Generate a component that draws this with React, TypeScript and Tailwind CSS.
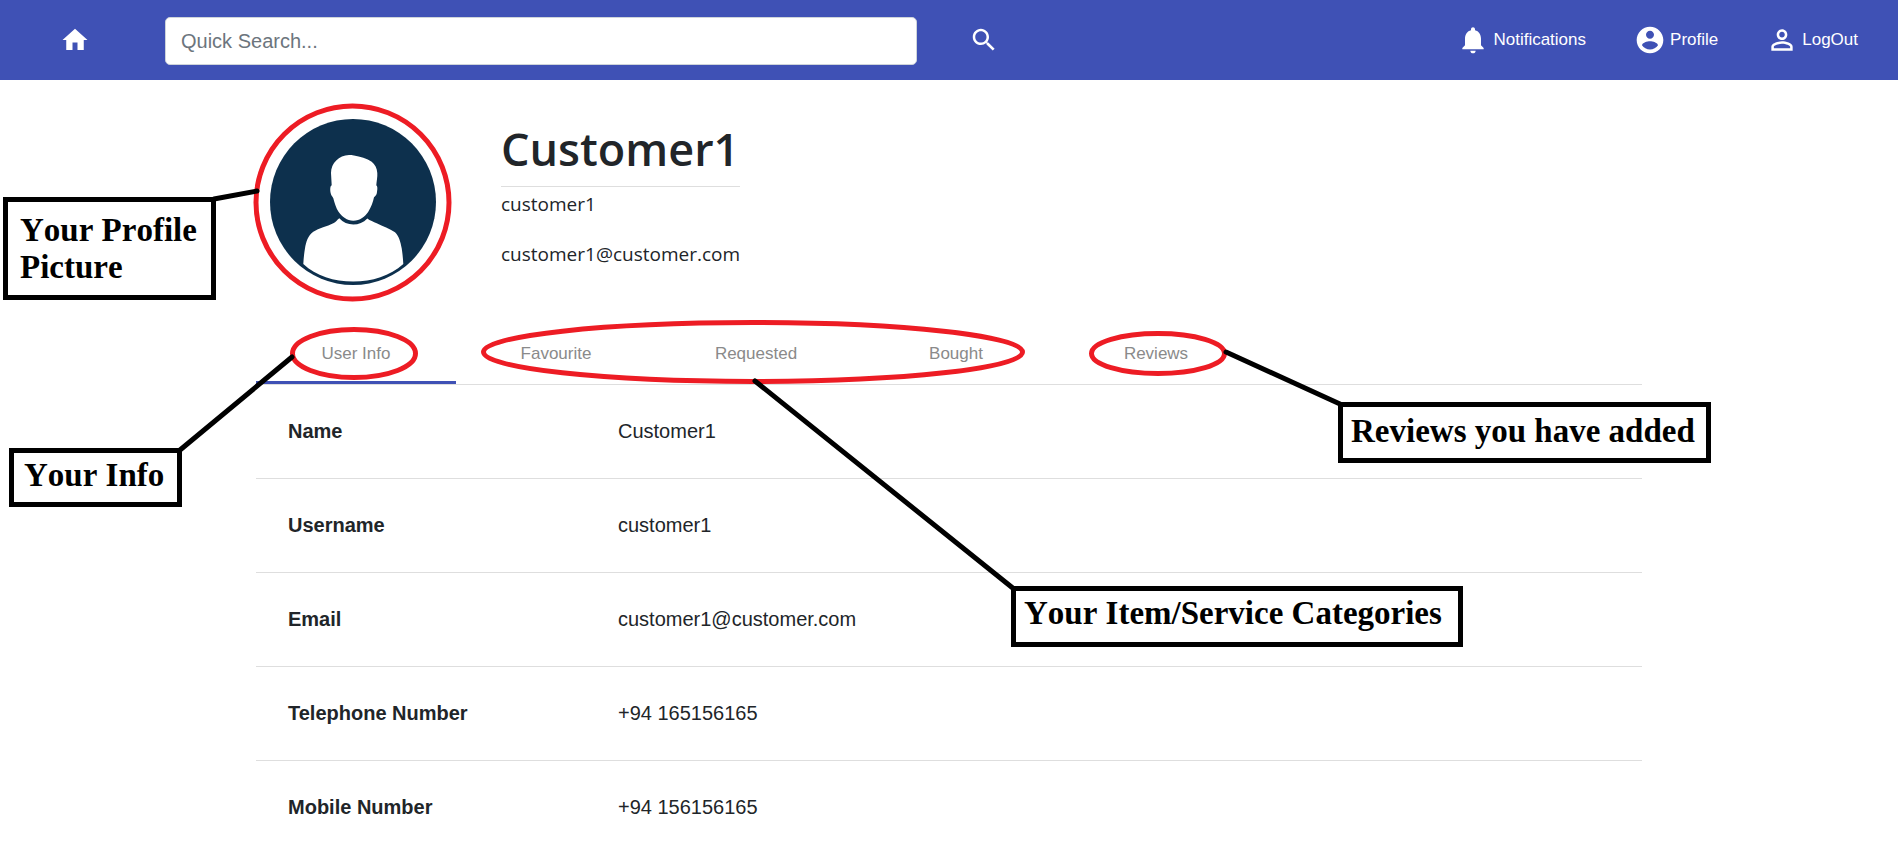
import type { ReactNode } from "react";

const paths = {
  home: "M10 20v-6h4v6h5v-8h3L12 3 2 12h3v8z",
  search:
    "M15.5 14h-.79l-.28-.27C15.41 12.59 16 11.11 16 9.5 16 5.91 13.09 3 9.5 3S3 5.91 3 9.5 5.91 16 9.5 16c1.61 0 3.09-.59 4.23-1.57l.27.28v.79l5 4.99L20.49 19l-4.99-5zm-6 0C7.01 14 5 11.99 5 9.5S7.01 5 9.5 5 14 7.01 14 9.5 11.99 14 9.5 14z",
  bell: "M12 22c1.1 0 2-.9 2-2h-4c0 1.1.89 2 2 2zm6-6v-5c0-3.07-1.64-5.64-4.5-6.32V4c0-.83-.67-1.5-1.5-1.5s-1.5.67-1.5 1.5v.68C7.63 5.36 6 7.92 6 11v5l-2 2v1h16v-1l-2-2z",
  account:
    "M12 2C6.48 2 2 6.48 2 12s4.48 10 10 10 10-4.48 10-10S17.52 2 12 2zm0 3c1.66 0 3 1.34 3 3s-1.34 3-3 3-3-1.34-3-3 1.34-3 3-3zm0 14.2c-2.5 0-4.71-1.28-6-3.22.03-1.99 4-3.08 6-3.08 1.99 0 5.97 1.09 6 3.08-1.29 1.94-3.5 3.22-6 3.22z",
  person:
    "M12 5.9c1.16 0 2.1.94 2.1 2.1s-.94 2.1-2.1 2.1S9.9 9.16 9.9 8s.94-2.1 2.1-2.1m0 9c2.97 0 6.1 1.46 6.1 2.1v1.1H5.9V17c0-.64 3.13-2.1 6.1-2.1M12 4C9.79 4 8 5.79 8 8s1.79 4 4 4 4-1.79 4-4-1.79-4-4-4zm0 9c-2.67 0-8 1.34-8 4v3h16v-3c0-2.66-5.33-4-8-4z",
};

function Icon({ name, className }: { name: keyof typeof paths; className: string }) {
  return (
    <svg viewBox="0 0 24 24" fill="currentColor" aria-hidden="true" className={className}>
      <path d={paths[name]} />
    </svg>
  );
}

function NavLink({ icon, children }: { icon: keyof typeof paths; children: ReactNode }) {
  return (
    <a href="#" className="flex items-center gap-1 text-[17px] leading-6">
      <Icon name={icon} className="size-8" />
      {children}
    </a>
  );
}

function Header() {
  return (
    <header className="flex h-20 items-center bg-[#3f51b5] pr-10 pl-[60px] text-white">
      <a href="#" aria-label="Home">
        <Icon name="home" className="size-[30px]" />
      </a>
      <input
        type="search"
        aria-label="Quick Search"
        placeholder="Quick Search..."
        className="mt-0.5 ml-[75px] h-12 w-[752px] min-w-0 rounded-[5px] border border-[#ced4da] bg-white px-[15px] text-xl text-[#495057] outline-none placeholder:text-[#6c757d]"
      />
      <button type="button" aria-label="Search" className="ml-[52px]">
        <Icon name="search" className="size-[30px]" />
      </button>
      <nav className="ml-auto flex items-center gap-12">
        <NavLink icon="bell">Notifications</NavLink>
        <NavLink icon="account">Profile</NavLink>
        <NavLink icon="person">LogOut</NavLink>
      </nav>
    </header>
  );
}

function Avatar() {
  return (
    <svg viewBox="0 0 166 166" role="img" aria-label="Profile picture" className="size-[166px] shrink-0">
      <circle cx="83" cy="83" r="83" fill="#0d304d" />
      <path
        fill="#fff"
        d="M79 36C69 36.500 61 44 61 54L61.700 66.300C60 67 60 71 60.700 74.300C61.300 77 62.500 77.500 63.300 79.300C64.500 84 66 89 68.500 92.700C72 97.500 77 101.700 83.300 101.700C90 101.700 95 97.500 98.300 92.700C101 88.500 103 83 104 78.300C106 76.500 107 75 107 72.700C107.600 69.500 107.600 67.500 106.300 66.300C106.600 62 107.600 58 107.300 54C107 49 105 45.500 101.700 42.700C97 39.500 90 37.500 84 36.500C82 36 81 36 79 36Z"
      />
      <path
        fill="#fff"
        d="M69.300 99.300C67 101 66 103 63.300 104.300C57 107.500 49 109 43.300 112.700C38 116.500 36 123 35 129.300C34 135 33.600 140 33.300 145C46 157 64 162.600 83.300 162.600C102 162.600 120 157 133.300 145C133 140 132.600 135 131.700 129.300C130.500 123 129 117 125 113.300C119.500 109.500 113 107.500 106.700 104.300C103.500 102.800 100 101.500 97.300 99.500C93.500 103.500 88.500 105.500 83.300 105.500C78 105.500 73 103.500 69.300 99.300Z"
      />
    </svg>
  );
}

const tabs = ["User Info", "Favourite", "Requested", "Bought", "Reviews"];

const details = [
  ["Name", "Customer1"],
  ["Username", "customer1"],
  ["Email", "customer1@customer.com"],
  ["Telephone Number", "+94 165156165"],
  ["Mobile Number", "+94 156156165"],
];

function Annotations() {
  const box =
    "absolute border-[5px] border-black bg-white font-['Liberation_Serif',serif] text-[33px] leading-[37px] font-bold whitespace-nowrap text-black [font-kerning:none]";
  return (
    <div className="pointer-events-none absolute inset-0 overflow-hidden">
      <svg className="absolute top-0 left-0 h-[845px] w-[1898px]" fill="none" strokeWidth="5" aria-hidden="true">
        <g stroke="#ed1c24">
          <circle cx="352.500" cy="202.500" r="96.500" />
          <ellipse cx="354" cy="353.500" rx="61.500" ry="24" />
          <ellipse cx="753" cy="352" rx="269.500" ry="29.500" />
          <ellipse cx="1158" cy="353.500" rx="66.500" ry="20" />
        </g>
        <g stroke="#000" strokeLinecap="round">
          <path d="M214 199L257 191" />
          <path d="M180 450L292 357" />
          <path d="M755 381L1014 589" />
          <path d="M1226 352L1340 404" />
        </g>
      </svg>
      <p className={`${box} top-[197px] left-[3px] w-[213px] px-3 pt-2.5 pb-[9px]`}>
        Your Profile
        <br />
        Picture
      </p>
      <p className={`${box} top-[448px] left-[9px] w-[173px] px-2.5 pt-1 pb-2`}>Your Info</p>
      <p className={`${box} top-[402px] left-[1338px] w-[373px] px-2 pt-1.5 pb-2`}>Reviews you have added</p>
      <p className={`${box} top-[586px] left-[1011px] w-[452px] px-2 pt-1 pb-2.5`}>Your Item/Service Categories</p>
    </div>
  );
}

export default function App() {
  return (
    <div className="relative min-h-screen overflow-hidden bg-white font-['Liberation_Sans',Arial,sans-serif] text-[#212529]">
      <Header />
      <main className="px-64">
        <section className="flex gap-[65px] pt-[39px] pl-[14px] font-['Open_Sans',sans-serif]">
          <Avatar />
          <div>
            <h1 className="border-b border-[#dedede] pb-2 text-[45px] leading-[59px] font-semibold">Customer1</h1>
            <p className="pt-[3px] text-[19px] leading-7">customer1</p>
            <p className="pt-[22px] text-[19px] leading-7">customer1@customer.com</p>
          </div>
        </section>
        <div role="tablist" className="mt-[39px] flex border-b border-[#dedede]">
          {tabs.map((tab, i) => (
            <button
              key={tab}
              type="button"
              role="tab"
              aria-selected={i === 0}
              className="h-[60px] w-[200px] border-b-[3px] border-transparent pt-0.5 text-[17px] text-[#8a8a8a] aria-selected:border-[#3f51b5]"
            >
              {tab}
            </button>
          ))}
        </div>
        <table className="-mt-px w-full table-fixed text-left text-xl">
          <tbody>
            {details.map(([label, value]) => (
              <tr key={label} className="h-[94px] border-b border-[#dedede]">
                <th scope="row" className="w-[330px] pl-8 font-bold">
                  {label}
                </th>
                <td className="pl-8">{value}</td>
              </tr>
            ))}
          </tbody>
        </table>
      </main>
      <Annotations />
    </div>
  );
}
